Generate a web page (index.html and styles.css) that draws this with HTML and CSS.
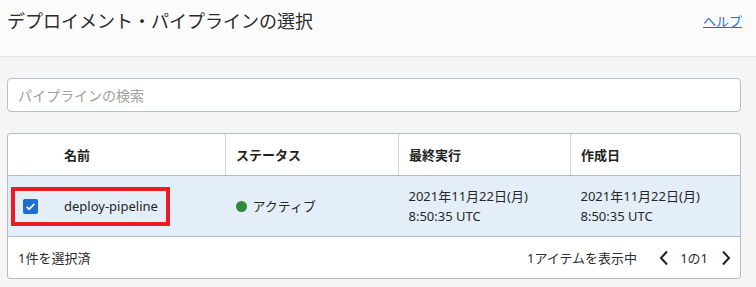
FILE: index.html
```html
<!DOCTYPE html>
<html lang="ja">
<head>
<meta charset="utf-8">
<title>デプロイメント・パイプラインの選択</title>
<link rel="stylesheet" href="styles.css">
</head>
<body>
<header class="pageHeader">
  <h1 class="pageTitle">デプロイメント・パイプラインの選択</h1>
  <a class="helpLink" href="#">ヘルプ</a>
</header>
<main class="content">
  <input class="searchBox" type="text" placeholder="パイプラインの検索">
  <div class="gridBox">
    <table class="grid">
      <thead>
        <tr>
          <th class="colName"><span class="nameHead">名前</span></th>
          <th class="colStatus">ステータス</th>
          <th class="colRun">最終実行</th>
          <th class="colCreated">作成日</th>
        </tr>
      </thead>
      <tbody>
        <tr class="selectedRow">
          <td class="colName">
            <div class="highlight">
              <span class="checkBox">
                <svg width="15" height="15" viewBox="0 0 15 15"><rect width="15" height="15" rx="2" fill="#1d6fcf"/><path d="M3.6 7.8 L6.2 10.2 L11.4 4.8" fill="none" stroke="#fff" stroke-width="1.7"/></svg>
              </span>
              <span class="pipeName">deploy-pipeline</span>
            </div>
          </td>
          <td class="colStatus"><span class="statusDot"></span>アクティブ</td>
          <td class="colRun">2021年11月22日(月)<br>8:50:35 UTC</td>
          <td class="colCreated">2021年11月22日(月)<br>8:50:35 UTC</td>
        </tr>
      </tbody>
    </table>
    <div class="gridFooter">
      <span>1件を選択済</span>
      <div class="pager">
        <span class="pagerInfo">1アイテムを表示中</span>
        <svg class="chev" width="10" height="16" viewBox="0 0 10 16"><path d="M8 1.5 L2 8 L8 14.5" fill="none" stroke="#222" stroke-width="2"/></svg>
        <span class="pageNum">1の1</span>
        <svg class="chev" width="10" height="16" viewBox="0 0 10 16"><path d="M2 1.5 L8 8 L2 14.5" fill="none" stroke="#222" stroke-width="2"/></svg>
      </div>
    </div>
  </div>
</main>
</body>
</html>
```

FILE: styles.css
```css
body {
 margin: 0;
 background-color: #f5f5f5;
 font-family: "Noto Sans", "Noto Sans CJK JP", sans-serif;
 color: #262626;
}

.pageHeader {
 display: flex;
 justify-content: space-between;
 align-items: center;
 height: 40px;
 padding: 0 14px 16px 7px;
 background-color: #fbfbfb;
 border-bottom: 1px solid #e4e4e4;
}
.pageTitle {
 margin: 0;
 font-size: 18px;
 font-weight: normal;
 color: #2b2b2b;
}
.helpLink {
 font-size: 13px;
 color: #1a6fd0;
}

.content {
 padding: 21px 15px 0 7px;
}

.searchBox {
 display: block;
 box-sizing: border-box;
 width: 100%;
 height: 34px;
 margin: 0 0 21px 0;
 padding: 0 10px;
 border: 1px solid #b9bdc4;
 border-radius: 4px;
 background-color: #fff;
 font-family: inherit;
 font-size: 14px;
}
.searchBox::placeholder {
 color: #a0a0a0;
}

.gridBox {
 border: 1px solid #b6bbc3;
 border-radius: 3px;
 background-color: #fff;
 overflow: hidden;
}

.grid {
 width: 100%;
 border-collapse: collapse;
 table-layout: fixed;
 font-size: 13px;
}
.grid th {
 height: 41px;
 padding: 0 10px;
 text-align: left;
 font-weight: bold;
 font-size: 13px;
 color: #1f1f1f;
 border-left: 1px solid #cfd3d8;
 border-bottom: 1px solid #b6bbc3;
}
.grid th:first-child {
 border-left: none;
}
.grid td {
 height: 60px;
 padding: 0 10px;
 line-height: 20px;
 color: #262626;
 border-bottom: 1px solid #b6bbc3;
}
.colName { width: 197px; }
.colStatus { width: 152px; }
.colRun { width: 151px; }
.nameHead {
 padding-left: 46px;
}
.selectedRow td {
 background-color: #e4eef8;
}
.grid td.colName {
 padding: 0 0 0 3px;
}

.highlight {
 display: flex;
 align-items: center;
 width: 151px;
 height: 31px;
 border: 4px solid #ec1c24;
}
.checkBox {
 display: flex;
 margin: 0 26px 0 8px;
}
.pipeName {
 color: #1f1f1f;
}

.statusDot {
 display: inline-block;
 width: 11px;
 height: 11px;
 margin-right: 6px;
 border-radius: 50%;
 background-color: #2f8a3c;
 vertical-align: -1px;
}

.gridFooter {
 display: flex;
 justify-content: space-between;
 align-items: center;
 height: 41px;
 padding: 0 9px 0 10px;
 font-size: 13px;
 color: #2b2b2b;
}
.pager {
 display: flex;
 align-items: center;
}
.pagerInfo {
 margin-right: 22px;
}
.pageNum {
 margin: 0 13px 0 11px;
}
```
